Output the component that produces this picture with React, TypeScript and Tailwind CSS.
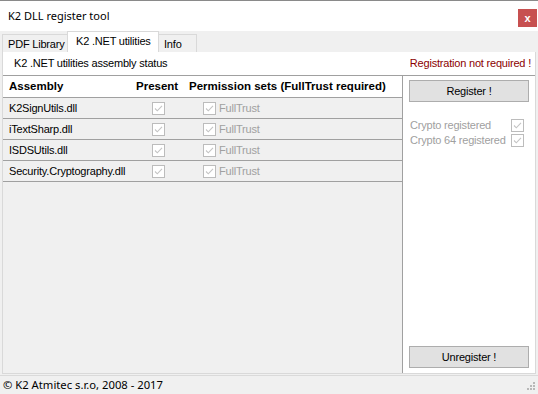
import React from "react";

const Check = () => (
  <svg width="13" height="13" viewBox="0 0 13 13" className="block">
    <rect x="0.5" y="0.5" width="12" height="12" fill="#ffffff" stroke="#bcbcbc" />
    <path d="M3 6.5 L5.3 8.8 L10 3.8" fill="none" stroke="#c4c4c4" strokeWidth="1.1" />
  </svg>
);

const rows = ["K2SignUtils.dll", "iTextSharp.dll", "ISDSUtils.dll", "Security.Cryptography.dll"];

export default function App() {
  const ms = { fontFamily: '"Liberation Sans", Arial, sans-serif' } as React.CSSProperties;
  const seg = { fontFamily: '"Noto Sans", "Open Sans", sans-serif' } as React.CSSProperties;
  return (
    <div className="w-[538px] h-[394px] bg-[#f0f0f0] flex flex-col overflow-hidden border-t border-[#8a8a8a] text-black">
      {/* title bar */}
      <div className="h-[30px] bg-white flex items-start justify-between shrink-0">
        <div className="pl-[8px] pt-[7px] text-[11px] leading-[16px]" style={seg}>K2 DLL register tool</div>
        <div className="mt-[8px] mr-[1px] w-[19px] h-[18px] bg-[#c75050] flex items-center justify-center text-white text-[11px] font-bold leading-none" style={ms}>x</div>
      </div>
      {/* tabs */}
      <div className="h-[21px] flex items-end pl-[2px] shrink-0 bg-[#f0f0f0] text-[11px] tracking-[-0.2px] whitespace-nowrap" style={ms}>
        <div className="h-[18px] pl-[5px] w-[66px] border border-b-0 border-[#d9d9d9] leading-[18px] bg-[#f0f0f0]">PDF Library</div>
        <div className="h-[21px] pl-[8px] w-[92px] border border-b-0 border-[#d9d9d9] bg-white leading-[18px] -mx-[1px] relative">K2 .NET utilities</div>
        <div className="h-[18px] pl-[5px] w-[39px] border border-b-0 border-[#d9d9d9] leading-[18px] bg-[#f0f0f0]">Info</div>
      </div>
      {/* tab page */}
      <div className="mx-[2px] h-[322px] bg-white border border-t-0 border-[#d9d9d9] flex flex-col shrink-0 text-[11px] tracking-[-0.2px]" style={ms}>
        <div className="h-[24px] flex items-center justify-between pl-[11px] pr-[4px] border-b border-[#a0a0a0] shrink-0">
          <span>K2 .NET utilities assembly status</span>
          <span className="text-[#8b0000]">Registration not required !</span>
        </div>
        <div className="flex flex-1 min-h-0">
          <div className="w-[400px] bg-[#f0f0f0] border-r border-[#a0a0a0] flex flex-col">
            <div className="h-[22px] bg-white flex items-center text-[11.5px] tracking-[0px] font-bold border-b border-[#a0a0a0] shrink-0">
              <span className="w-[128px] pl-[6px]">Assembly</span>
              <span className="w-[52px] pl-[5px]">Present</span>
              <span className="pl-[6px]">Permission sets (FullTrust required)</span>
            </div>
            {rows.map((r) => (
              <div key={r} className="h-[21px] flex items-center border-b border-[#a0a0a0] shrink-0">
                <span className="w-[149px] pl-[6px]">{r}</span>
                <span className="w-[51px]"><Check /></span>
                <Check />
                <span className="pl-[3px] text-[#a0a0a0]">FullTrust</span>
              </div>
            ))}
          </div>
          <div className="flex-1 flex flex-col px-[6px] pt-[4px] pb-[5px]">
            <div className="h-[22px] bg-[#e1e1e1] border border-[#adadad] flex items-center justify-center">Register !</div>
            <div className="mt-[16px] flex flex-col text-[#a0a0a0] pl-[1px]">
              <div className="flex items-center justify-between h-[15px] pr-[5px]"><span>Crypto registered</span><Check /></div>
              <div className="flex items-center justify-between h-[15px] pr-[5px]"><span>Crypto 64 registered</span><Check /></div>
            </div>
            <div className="mt-auto h-[22px] bg-[#e1e1e1] border border-[#adadad] flex items-center justify-center">Unregister !</div>
          </div>
        </div>
      </div>
      {/* status bar */}
      <div className="flex-1 border-t border-[#dadada] mt-[1px] flex items-center justify-between pl-[3px] relative" style={seg}>
        <span className="text-[11.25px] leading-[16px]">© K2 Atmitec s.r.o, 2008 - 2017</span>
        <svg width="12" height="12" viewBox="0 0 12 12" className="absolute right-[2px] bottom-[2px]">
          {[[9,1],[6,4],[9,4],[3,7],[6,7],[9,7]].map(([x,y],i)=>(<rect key={i} x={x} y={y+1} width="2" height="2" fill="#b8b8b8"/>))}
        </svg>
      </div>
    </div>
  );
}
